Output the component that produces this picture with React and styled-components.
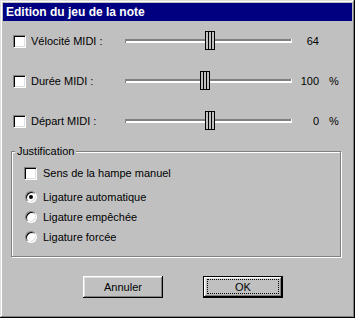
import React from 'react';
import styled, { createGlobalStyle, css } from 'styled-components';

const GlobalStyle = createGlobalStyle`
  body {
    margin: 0;
    background: #c0c0c0;
    font-family: "Liberation Sans", Arial, sans-serif;
    font-size: 11px;
    color: #000;
  }
`;

const Window = styled.div`
  width: 355px;
  height: 318px;
  box-sizing: border-box;
  padding: 3px;
  background: #c0c0c0;
  box-shadow: inset -1px -1px #000, inset 1px 1px #dfdfdf,
    inset -2px -2px #808080, inset 2px 2px #fff;
  display: flex;
  flex-direction: column;
`;

const TitleBar = styled.div`
  height: 18px;
  background: #000080;
  color: #fff;
  display: flex;
  align-items: center;
  padding-left: 3px;
  font-size: 12px;
  font-weight: bold;
`;

const Body = styled.div`
  display: flex;
  flex-direction: column;
`;

const SliderRow = styled.div`
  height: 40px;
  display: flex;
  align-items: center;
  padding-left: 10px;
`;

const sunken = css`
  box-sizing: border-box;
  background: #fff;
  border: 1px solid;
  border-color: #808080 #fff #fff #808080;
  box-shadow: inset 1px 1px #000, inset -1px -1px #dfdfdf;
`;

const CheckBox = styled.span`
  ${sunken};
  width: 13px;
  height: 13px;
  flex: none;
`;

const RowLabel = styled.span`
  width: 94px;
  margin-left: 5px;
`;

const Track = styled.div`
  position: relative;
  width: 167px;
  height: 4px;
  box-sizing: border-box;
  border-left: 1px solid #808080;
  border-right: 1px solid #fff;
  background: linear-gradient(#808080 50%, #fff 50%);
`;

const Thumb = styled.div`
  position: absolute;
  top: -8px;
  left: ${(p) => p.$pos - 1}px;
  width: 10px;
  height: 19px;
  box-sizing: border-box;
  border: 1px solid #000;
  background: linear-gradient(
      to right,
      transparent 2px,
      #000 2px 3px,
      transparent 3px 5px,
      #000 5px 6px,
      transparent 6px
    ),
    #c0c0c0;
`;

const Value = styled.span`
  width: 27px;
  text-align: right;
`;

const Unit = styled.span`
  margin-left: 10px;
`;

const Group = styled.div`
  position: relative;
  margin: 10px 0 0 8px;
  width: 330px;
  height: 106px;
  box-sizing: border-box;
  border: 1px solid #808080;
  box-shadow: inset 1px 1px #fff, 1px 1px #fff;
  padding: 11px 0 0 12px;
  display: flex;
  flex-direction: column;
`;

const GroupTitle = styled.span`
  position: absolute;
  top: -7px;
  left: 3px;
  padding: 0 2px;
  line-height: 13px;
  background: #c0c0c0;
`;

const OptionRow = styled.div`
  height: 20px;
  display: flex;
  align-items: center;
  gap: 6px;
  margin-bottom: ${(p) => (p.$spaced ? 4 : 0)}px;
`;

const Radio = styled.span`
  ${sunken};
  position: relative;
  width: 12px;
  height: 12px;
  margin-left: 1px;
  border-radius: 50%;
  flex: none;

  ${(p) =>
    p.$checked &&
    css`
      &::after {
        content: '';
        position: absolute;
        left: 3px;
        top: 3px;
        width: 4px;
        height: 4px;
        border-radius: 50%;
        background: #000;
      }
    `}
`;

const ButtonRow = styled.div`
  display: flex;
  gap: 40px;
  margin-top: 19px;
  padding-left: 80px;
`;

const Button = styled.button`
  position: relative;
  width: 80px;
  height: 22px;
  padding: 0;
  font-family: inherit;
  font-size: 11px;
  color: #000;
  background: #c0c0c0;
  border: ${(p) => (p.$default ? '1px solid #000' : 'none')};
  box-shadow: inset -1px -1px #000, inset 1px 1px #fff,
    inset -2px -2px #808080, inset 2px 2px #dfdfdf;

  ${(p) =>
    p.$default &&
    css`
      &::after {
        content: '';
        position: absolute;
        inset: 2px 3px 3px 3px;
        border: 1px dotted #000;
      }
    `}
`;

const sliders = [
  { label: 'Vélocité MIDI :', pos: 80, value: '64' },
  { label: 'Durée MIDI :', pos: 75, value: '100', unit: '%' },
  { label: 'Départ MIDI :', pos: 80, value: '0', unit: '%' },
];

const radios = [
  { label: 'Ligature automatique', checked: true },
  { label: 'Ligature empêchée' },
  { label: 'Ligature forcée' },
];

export default function App() {
  return (
    <>
      <GlobalStyle />
      <Window>
        <TitleBar>Edition du jeu de la note</TitleBar>
        <Body>
          {sliders.map((s) => (
            <SliderRow key={s.label}>
              <CheckBox />
              <RowLabel>{s.label}</RowLabel>
              <Track>
                <Thumb $pos={s.pos} />
              </Track>
              <Value>{s.value}</Value>
              {s.unit && <Unit>{s.unit}</Unit>}
            </SliderRow>
          ))}
          <Group>
            <GroupTitle>Justification</GroupTitle>
            <OptionRow $spaced>
              <CheckBox />
              <span>Sens de la hampe manuel</span>
            </OptionRow>
            {radios.map((r) => (
              <OptionRow key={r.label}>
                <Radio $checked={r.checked} />
                <span>{r.label}</span>
              </OptionRow>
            ))}
          </Group>
          <ButtonRow>
            <Button>Annuler</Button>
            <Button $default>OK</Button>
          </ButtonRow>
        </Body>
      </Window>
    </>
  );
}
